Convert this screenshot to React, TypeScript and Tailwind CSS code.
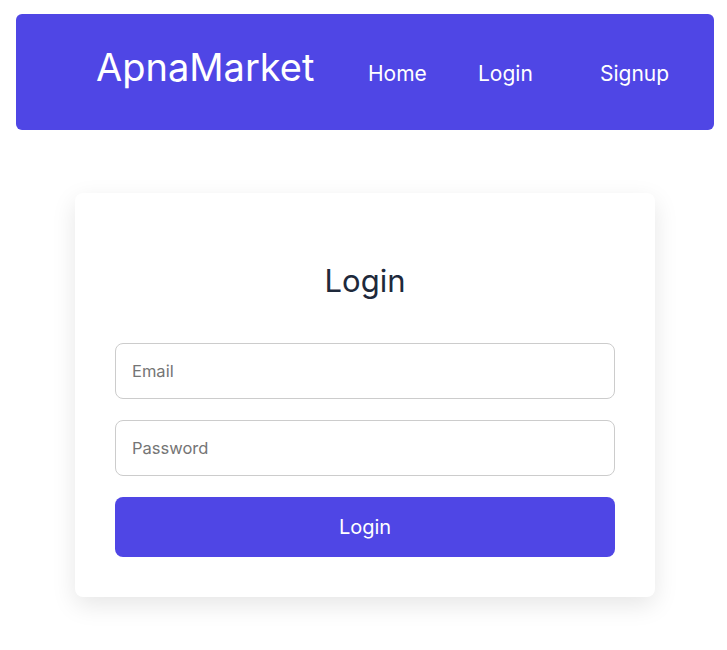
import React from "react";

const font = { fontFamily: "Inter, 'Noto Sans', sans-serif" };

const Navbar: React.FC = () => {
  return (
    <nav className="flex h-[116px] items-center rounded-md bg-[#4f46e5] text-white">
      <div className="w-[352px] shrink-0 pl-[80px]">
        <span className="-mt-[10px] block whitespace-nowrap text-[38px] leading-none">
          ApnaMarket
        </span>
      </div>
      <a className="mt-[3px] w-[110px] shrink-0 whitespace-nowrap text-[21px]" href="#">
        Home
      </a>
      <a className="mt-[3px] w-[122px] shrink-0 whitespace-nowrap text-[21px]" href="#">
        Login
      </a>
      <a className="mt-[3px] shrink-0 whitespace-nowrap text-[21px]" href="#">
        Signup
      </a>
    </nav>
  );
};

const LoginCard: React.FC = () => {
  return (
    <div className="mx-auto mt-[63px] w-[580px] rounded-lg bg-white px-10 pb-10 pt-16 shadow-[0_8px_24px_rgba(0,0,0,0.1)]">
      <h1 className="mb-[38px] text-center text-[31px] leading-[48px] text-[#1e293b]">
        Login
      </h1>
      <form className="flex flex-col gap-[21px]" onSubmit={(e) => e.preventDefault()}>
        <input
          className="h-[56px] w-full rounded-lg border border-[#cccccc] px-4 text-[16.5px] text-gray-800 outline-none placeholder:text-[#757575]"
          type="email"
          placeholder="Email"
        />
        <input
          className="h-[56px] w-full rounded-lg border border-[#cccccc] px-4 text-[16.5px] text-gray-800 outline-none placeholder:text-[#757575]"
          type="password"
          placeholder="Password"
        />
        <button
          className="h-[60px] w-full rounded-lg bg-[#4f46e5] text-[20px] text-white"
          type="submit"
        >
          Login
        </button>
      </form>
    </div>
  );
};

export default function App() {
  return (
    <div className="min-h-[650px] bg-white" style={font}>
      <div className="ml-4 w-[698px] pt-[14px]">
        <Navbar />
        <LoginCard />
      </div>
    </div>
  );
}
